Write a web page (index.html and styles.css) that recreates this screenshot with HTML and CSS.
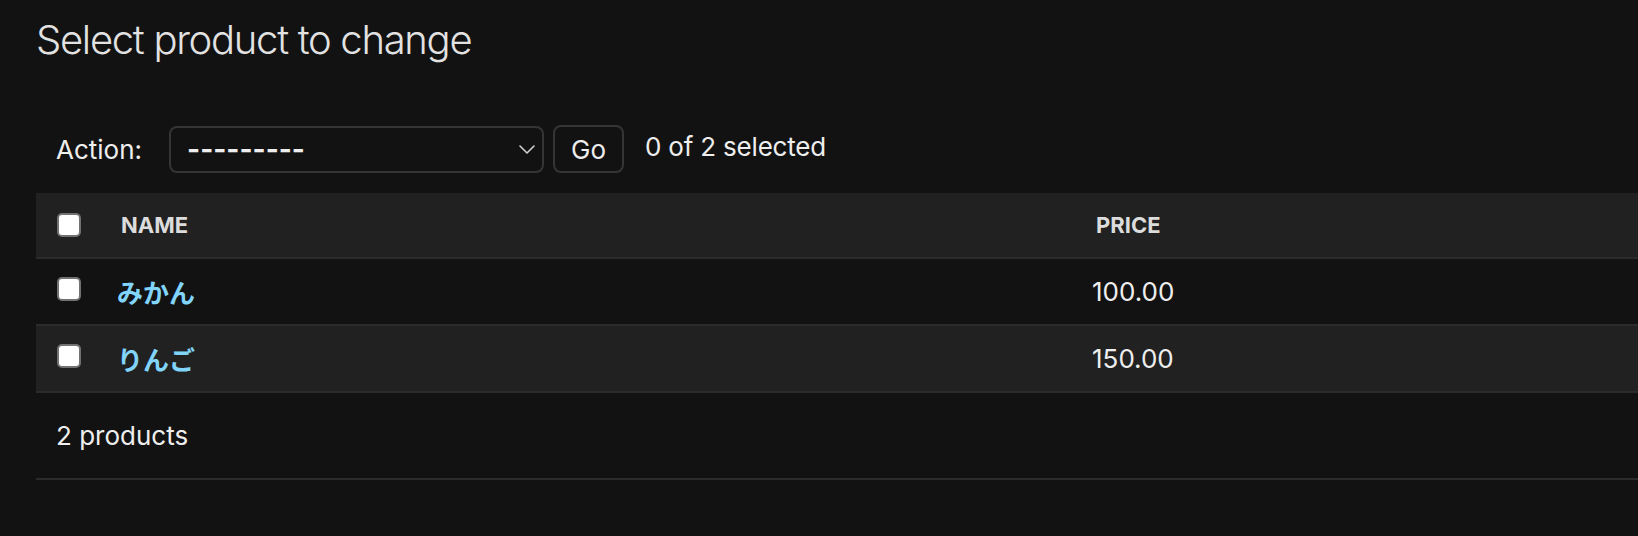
FILE: index.html
```html
<!DOCTYPE html>
<html lang="en">
<head>
<meta charset="utf-8">
<title>Select product to change</title>
<link rel="stylesheet" href="styles.css">
</head>
<body>
<div class="content">
  <h1 class="title">Select product to change</h1>
  <form class="changelist">
    <div class="actions">
      <label class="action-label">Action:</label>
      <div class="select">
        <span class="select-value">---------</span>
        <svg class="chevron" width="16" height="9" viewBox="0 0 16 9"><path d="M1 1 L8 8 L15 1" fill="none" stroke="#d0d0d0" stroke-width="1.6" stroke-linecap="round" stroke-linejoin="round"/></svg>
      </div>
      <button type="button" class="go">Go</button>
      <span class="counter">0 of 2 selected</span>
    </div>
    <table class="results">
      <colgroup>
        <col class="col-check">
        <col class="col-name">
        <col class="col-price">
      </colgroup>
      <thead>
        <tr>
          <th class="check-cell"><input type="checkbox" class="checkbox"></th>
          <th class="head-cell">Name</th>
          <th class="head-cell">Price</th>
        </tr>
      </thead>
      <tbody>
        <tr class="row-odd">
          <td class="check-cell"><input type="checkbox" class="checkbox"></td>
          <td class="body-cell"><a class="link" href="#">みかん</a></td>
          <td class="body-cell">100.00</td>
        </tr>
        <tr class="row-even">
          <td class="check-cell"><input type="checkbox" class="checkbox"></td>
          <td class="body-cell"><a class="link" href="#">りんご</a></td>
          <td class="body-cell">150.00</td>
        </tr>
      </tbody>
    </table>
    <p class="paginator">2 products</p>
  </form>
</div>
</body>
</html>
```

FILE: styles.css
```css
html, body {
  margin: 0;
  padding: 0;
  background: #121212;
}

body {
  font-family: Inter, "Noto Sans", "Noto Sans CJK JP", sans-serif;
  color: #eeeeee;
  overflow: hidden;
}

.content {
  padding: 16px 0 0 36px;
}

.title {
  margin: 0;
  font-size: 40px;
  line-height: 48px;
  font-weight: 300;
  letter-spacing: -1.3px;
  color: #e2e2e2;
}

.changelist {
  margin: 0;
}

.actions {
  display: flex;
  align-items: center;
  height: 48px;
  margin: 61px 0 20px 0;
  padding-left: 20px;
  font-size: 26px;
}

.action-label {
  margin-right: 27px;
  color: #eeeeee;
}

.select {
  box-sizing: border-box;
  width: 375px;
  height: 47px;
  display: flex;
  align-items: center;
  justify-content: space-between;
  padding: 0 7px 0 16px;
  border: 2px solid #353535;
  border-radius: 8px;
  background: #121212;
}

.select-value {
  font-weight: 700;
  letter-spacing: 0;
  color: #eeeeee;
  font-size: 28px;
}

.chevron {
  display: block;
}

.go {
  box-sizing: border-box;
  height: 48px;
  margin-left: 9px;
  padding: 0 16px;
  border: 2px solid #353535;
  border-radius: 8px;
  background: #121212;
  color: #eeeeee;
  font-family: inherit;
  font-size: 26px;
}

.counter {
  margin-left: 21px;
  margin-bottom: 6px;
  color: #eeeeee;
  letter-spacing: -0.2px;
}

.results {
  width: 1602px;
  table-layout: fixed;
  border-collapse: collapse;
  border-spacing: 0;
}

.col-check { width: 70px; }
.col-name { width: 975px; }
.col-price { width: 557px; }

.results thead tr {
  background: #212121;
  border-bottom: 2px solid #2b2b2b;
}

.results th {
  height: 64px;
  padding: 0;
  text-align: left;
}

.results .head-cell {
  padding-left: 15px;
  font-size: 22px;
  font-weight: 700;
  text-transform: uppercase;
  color: #dcdcdc;
  vertical-align: middle;
}

.results .check-cell {
  padding: 0 0 0 21px;
  box-sizing: border-box;
}

.results thead .check-cell {
  vertical-align: middle;
}

.results tbody .check-cell {
  vertical-align: top;
  padding-top: 18px;
}

.results tbody tr {
  border-bottom: 2px solid #2b2b2b;
}

.results td {
  height: 65px;
}

.row-odd { background: #121212; }
.row-even { background: #212121; }

.body-cell {
  padding: 0 0 0 11px;
  font-size: 26px;
  color: #eeeeee;
  vertical-align: middle;
}

.link {
  color: #81d4fa;
  font-weight: 700;
  text-decoration: none;
  font-family: "Noto Sans CJK JP", sans-serif;
  font-size: 26px;
}

.checkbox {
  -webkit-appearance: none;
  appearance: none;
  display: block;
  box-sizing: border-box;
  width: 24px;
  height: 24px;
  margin: 0;
  background: #ffffff;
  border: 2px solid #727272;
  border-radius: 5px;
}

.paginator {
  box-sizing: border-box;
  width: 1602px;
  height: 87px;
  margin: 0;
  padding-left: 20px;
  line-height: 85px;
  font-size: 26px;
  color: #eeeeee;
  border-bottom: 2px solid #2b2b2b;
}
```
